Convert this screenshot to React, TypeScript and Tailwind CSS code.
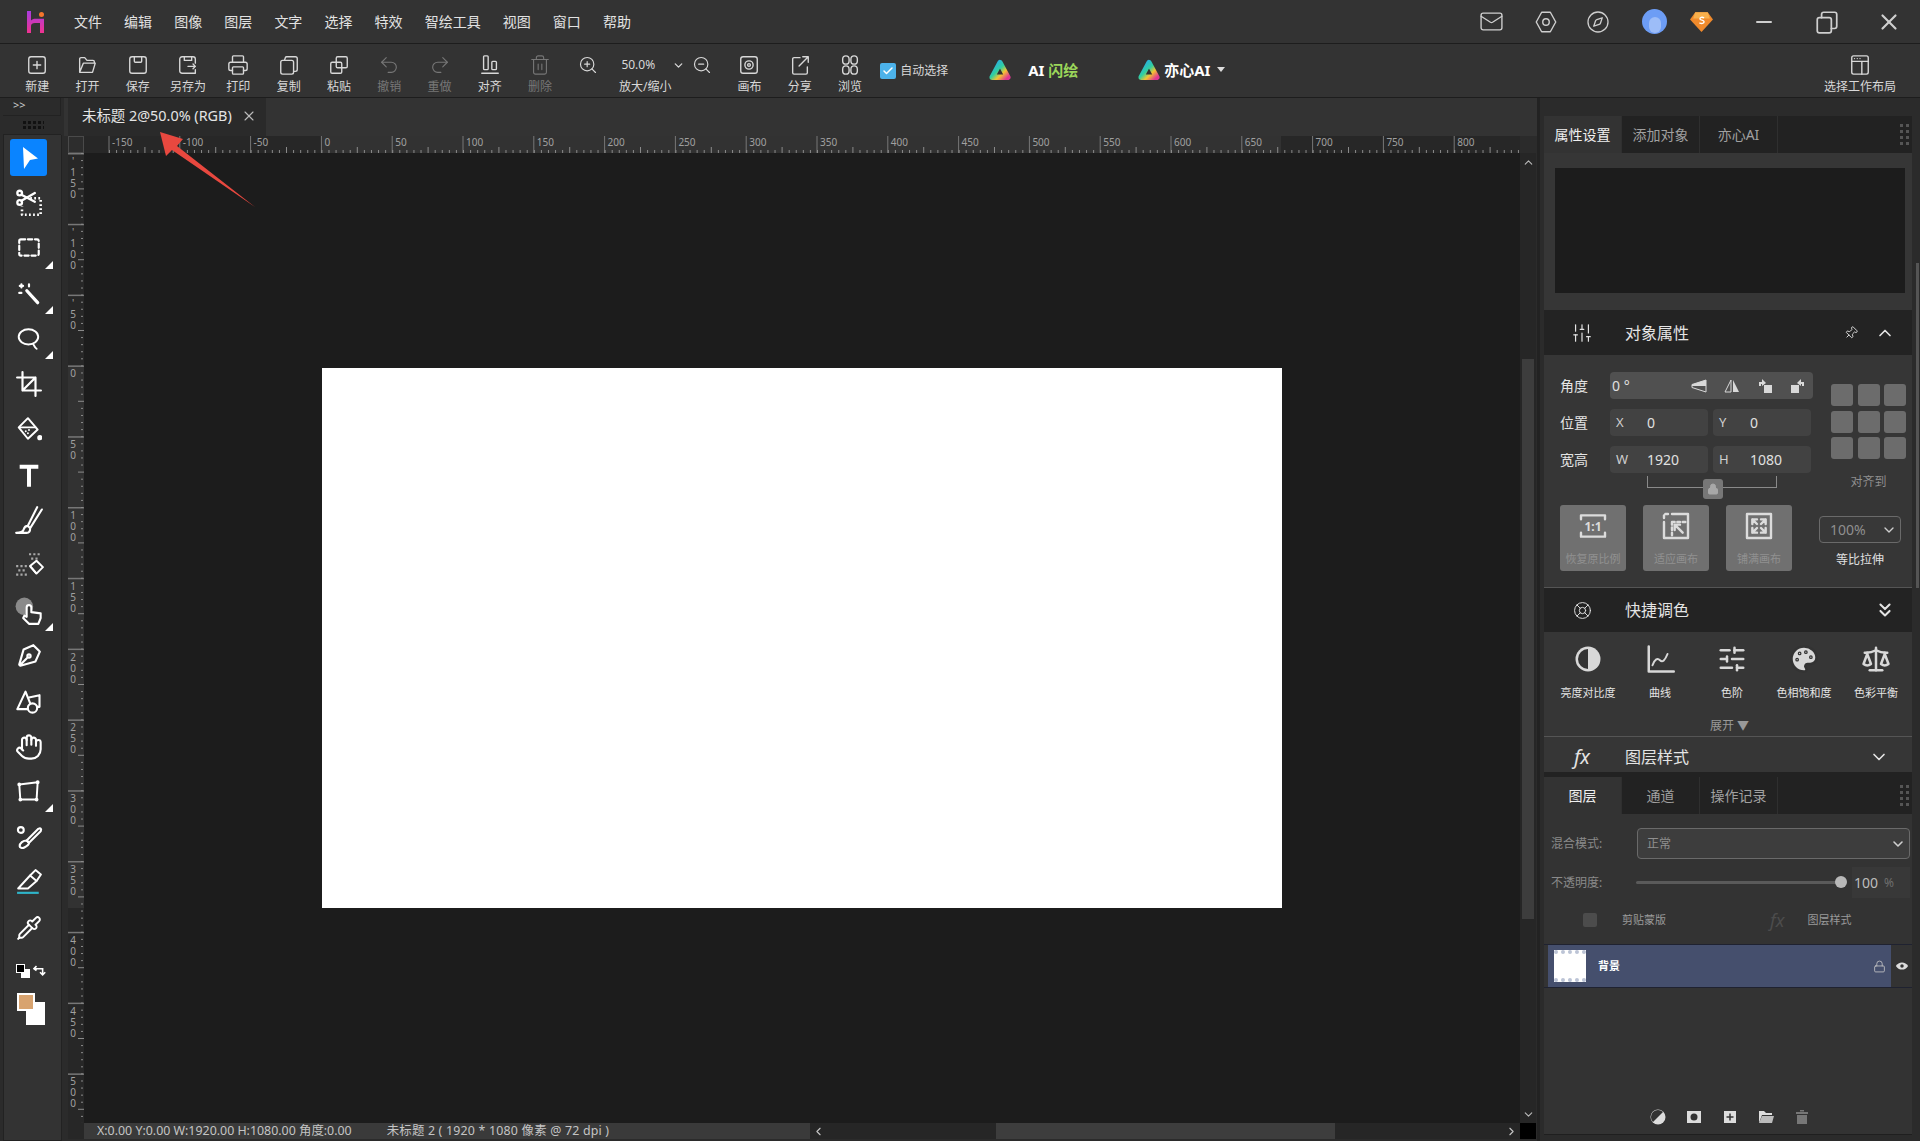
import { ReactNode } from 'react';
import { ChevronDown, ChevronUp, ChevronsDown, ChevronLeft, ChevronRight, Lock, Pin, X, Minus, Hand, Pipette, Printer, Trash2, Undo2, Redo2, ZoomIn, ZoomOut, Mail, Compass, SlidersVertical, SlidersHorizontal, Palette, Scale, LifeBuoy, Check } from 'lucide-react';

const Ic = ({ size = 24, sw = 1.5, children, className }: { size?: number; sw?: number; children: ReactNode; className?: string }) => (
  <svg viewBox="0 0 24 24" width={size} height={size} fill="none" stroke="currentColor" strokeWidth={sw} strokeLinecap="round" strokeLinejoin="round" className={className}>
    {children}
  </svg>
);

const toolbarItems: { label: string; dim?: boolean; icon: ReactNode }[] = [
  { label: '新建', icon: <Ic size={22}><rect x="3" y="3" width="18" height="18" rx="2.5" /><path d="M12 8v8M8 12h8" /></Ic> },
  { label: '打开', icon: <Ic size={22}><path d="M4 20V5.5A1.5 1.5 0 0 1 5.5 4h4l2.5 3h6.5A1.5 1.5 0 0 1 20 8.5V10M4 20h14l3-10H8z" /></Ic> },
  { label: '保存', icon: <Ic size={22}><rect x="3" y="3" width="18" height="18" rx="2.5" /><path d="M8 3v5a1 1 0 0 0 1 1h6a1 1 0 0 0 1-1V3" /></Ic> },
  { label: '另存为', icon: <Ic size={22}><path d="M20 10V5.5A2.5 2.5 0 0 0 17.500 3h-12A2.500 2.500 0 0 0 3 5.500v13A2.500 2.500 0 0 0 5.500 21H20v-4M8 3v4h8V3M12 13.500h8M17.500 11l2.500 2.500-2.500 2.500" /></Ic> },
  { label: '打印', icon: <Printer size={22} strokeWidth={1.5} /> },
  { label: '复制', icon: <Ic size={22}><rect x="3" y="7" width="14" height="15" rx="2" /><path d="M7 7l1-3a1.500 1.500 0 0 1 1.500-1H19a2 2 0 0 1 2 2v12a2 2 0 0 1-2 2h-2" /></Ic> },
  { label: '粘贴', icon: <Ic size={22}><rect x="3" y="9" width="12" height="12" rx="1.500" /><rect x="9" y="3" width="12" height="12" rx="1.500" /></Ic> },
  { label: '撤销', dim: true, icon: <Undo2 size={22} strokeWidth={1.2} /> },
  { label: '重做', dim: true, icon: <Redo2 size={22} strokeWidth={1.2} /> },
  { label: '对齐', icon: <Ic size={22}><rect x="5" y="2" width="5" height="15" rx="1" /><rect x="14" y="8" width="5" height="9" rx="1" /><path d="M3 21h18" /></Ic> },
  { label: '删除', dim: true, icon: <Trash2 size={22} strokeWidth={1.2} /> },
];

const menus = ['文件', '编辑', '图像', '图层', '文字', '选择', '特效', '智绘工具', '视图', '窗口', '帮助'];

const AiLogo = ({ id }: { id: string }) => (
  <svg viewBox="0 0 24 24" width={22} height={24} fill="none">
    <defs>
      <linearGradient id={id} x1="0" y1="0" x2="1" y2="1">
        <stop offset="0" stopColor="#2aa5f0" />
        <stop offset="0.45" stopColor="#2fd0a0" />
        <stop offset="0.7" stopColor="#f4c430" />
        <stop offset="1" stopColor="#e0388f" />
      </linearGradient>
    </defs>
    <path d="M12 4 20.500 20H3.500z" stroke={`url(#${id})`} strokeWidth="6" strokeLinejoin="round" />
  </svg>
);

const TopBar = () => (
  <div className="flex h-[44px] shrink-0 items-center border-b border-[#1d1d1d] bg-[#333333] text-[#e2e2e2]">
    <svg viewBox="0 0 17 22" width={17} height={22} className="ml-[27px] shrink-0">
      <defs>
        <linearGradient id="hi" x1="0" y1="0" x2="0" y2="1">
          <stop offset="0" stopColor="#a83ce0" />
          <stop offset="1" stopColor="#f0338f" />
        </linearGradient>
      </defs>
      <path d="M0 0h4v9.500c1-1.200 2.500-1.800 4.500-1.800H17V22h-4V12H8c-2.500 0-4 1-4 3v7H0z" fill="url(#hi)" />
      <circle cx="14.500" cy="3.500" r="2.500" fill="#f5762d" />
    </svg>
    <div className="ml-[30px] flex text-[14px]">
      {menus.map((m) => (
        <span key={m} className="mr-[22.100px] whitespace-nowrap">{m}</span>
      ))}
    </div>
    <div className="ml-auto flex items-center text-[#cfcfcf]">
      <Mail size={25} strokeWidth={1.300} />
      <span className="ml-[29px]">
        <Ic size={26} sw={1.300}><path d="M8 3h8l5 9-5 9H8l-5-9z" /><circle cx="12" cy="12" r="3" /></Ic>
      </span>
      <span className="ml-[27px]"><Compass size={24} strokeWidth={1.300} /></span>
      <span className="ml-[32px] flex h-[25px] w-[25px] items-end justify-center overflow-hidden rounded-full bg-[#6d9df5]">
        <span className="mb-[1px] h-[16px] w-[12px] rounded-full bg-[#9dbdf8]" />
      </span>
      <svg viewBox="0 0 24 24" width={25} height={25} className="ml-[22px]">
        <path d="M6 3h12l5 7-11 12L1 10z" fill="#f08a2c" />
        <path d="M6 3h12l2 6H4z" fill="#f8b04c" />
        <path d="M14.500 8.500c-2-1-4-.500-4 1s4 1 4 2.800-2.500 2-4.500 1" stroke="#fff" strokeWidth="1.300" fill="none" />
      </svg>
      <span className="ml-[38px]"><Minus size={24} strokeWidth={2} /></span>
      <span className="ml-[38px]">
        <Ic size={26} sw={1.600}><rect x="3" y="8" width="13" height="14" rx="2" /><path d="M7 8V5a2 2 0 0 1 2-2h10a2 2 0 0 1 2 2v11a2 2 0 0 1-2 2h-3" /></Ic>
      </span>
      <span className="ml-[36px] mr-[18px]"><X size={26} strokeWidth={2} /></span>
    </div>
  </div>
);

const ToolButton = ({ label, dim, children }: { label: string; dim?: boolean; children: ReactNode }) => (
  <div className={`flex w-[50.300px] shrink-0 flex-col items-center ${dim ? 'text-[#777777]' : 'text-[#d8d8d8]'}`}>
    <div className="flex h-[24px] items-center justify-center">{children}</div>
    <span className="mt-[2px] whitespace-nowrap text-[12px] leading-[16px]">{label}</span>
  </div>
);

const Toolbar = () => (
  <div className="flex h-[54px] shrink-0 items-start border-b border-[#1d1d1d] bg-[#333333] pl-[12px] pt-[9px] text-[#d8d8d8]">
    {toolbarItems.map((t) => (
      <ToolButton key={t.label} label={t.label} dim={t.dim}>{t.icon}</ToolButton>
    ))}
    <div className="ml-[13px] flex h-[24px] w-[20px] items-center justify-center"><ZoomIn size={22} strokeWidth={1.400} /></div>
    <div className="flex w-[94px] flex-col items-center">
      <div className="flex h-[24px] items-center text-[12px]">
        <span className="-ml-[3px]">50.0%</span>
        <ChevronDown size={13} strokeWidth={2.400} className="ml-[17px] -mr-[19px]" />
      </div>
      <span className="mt-[2px] text-[12px] leading-[16px]">放大/缩小</span>
    </div>
    <div className="flex h-[24px] w-[20px] items-center justify-center"><ZoomOut size={22} strokeWidth={1.400} /></div>
    <div className="ml-[12px] flex">
      <ToolButton label="画布">
        <Ic size={22}><rect x="3" y="3" width="18" height="18" rx="2.500" /><circle cx="12" cy="12" r="4.500" /><circle cx="12" cy="12" r="1.500" /></Ic>
      </ToolButton>
      <ToolButton label="分享">
        <Ic size={22}><path d="M12 4H5.500A1.500 1.500 0 0 0 4 5.500v15A1.500 1.500 0 0 0 5.500 22h13a1.500 1.500 0 0 0 1.500-1.500V14M11 13l10-10M15 3h6v6" /></Ic>
      </ToolButton>
      <ToolButton label="浏览">
        <Ic size={22}><rect x="4" y="2" width="7" height="9" rx="3.500" /><rect x="13" y="2" width="7" height="9" rx="3.500" /><rect x="4" y="13" width="7" height="9" rx="3.500" /><rect x="13" y="13" width="7" height="9" rx="3.500" /></Ic>
      </ToolButton>
    </div>
    <div className="ml-[5px] mt-[10px] flex h-[16px] w-[16px] items-center justify-center rounded-[2px] bg-[#4cb2ea] text-white">
      <Check size={12} strokeWidth={3} />
    </div>
    <span className="ml-[4px] mt-[9px] whitespace-nowrap text-[12px] leading-[18px]">自动选择</span>
    <div className="ml-[41px] mt-[5px]"><AiLogo id="ai1" /></div>
    <span className="ml-[17px] mt-[5px] w-[51px] whitespace-nowrap text-[15px] font-bold leading-[24px] text-white">
      AI <span className="text-[#9bd65a]">闪绘</span>
    </span>
    <div className="ml-[59px] mt-[5px]"><AiLogo id="ai2" /></div>
    <span className="ml-[4px] mt-[5px] whitespace-nowrap text-[15px] font-bold leading-[24px] text-white">亦心AI</span>
    <span className="ml-[7px] mt-[14px] h-0 w-0 border-x-[4px] border-t-[5px] border-x-transparent border-t-[#dddddd]" />
    <div className="ml-auto mr-[15px] flex w-[90px] flex-col items-center">
      <div className="flex h-[24px] items-center">
        <Ic size={22}><rect x="3" y="2" width="18" height="20" rx="2" /><path d="M3 8h18M14 8v14M6 5h.01M9 5h.01M12 5h.01" /></Ic>
      </div>
      <span className="mt-[2px] whitespace-nowrap text-[12px] leading-[16px]">选择工作布局</span>
    </div>
  </div>
);

const Corner = () => (
  <span className="absolute bottom-[-2px] right-[-6px] h-0 w-0 border-b-[8px] border-l-[8px] border-b-white border-l-transparent" />
);

const tools: { corner?: boolean; active?: boolean; icon: ReactNode }[] = [
  { active: true, icon: <svg viewBox="0 0 24 24" width={24} height={24}><path d="M6 1 21 12.500 13 14 7 23z" fill="#fff" /></svg> },
  { icon: <Ic size={28} sw={2}><circle cx="4" cy="3.500" r="2" /><circle cx="4" cy="11.500" r="2" /><path d="M5.500 5 17 11M5.500 10 17 3.500" /><path d="M13 8h9v14H6v-7" strokeDasharray="1.500 2" strokeLinecap="butt" strokeWidth={2.200} /></Ic> },
  { corner: true, icon: <Ic size={26} sw={2}><rect x="3" y="4" width="18" height="15" rx="1.500" strokeDasharray="4 2.500" /></Ic> },
  { corner: true, icon: <Ic size={26} sw={2}><path d="M10 9 20 20" strokeWidth={3} /><path d="M5 3v3M3.500 4.500h3M12 3v2M3 11h2" /></Ic> },
  { corner: true, icon: <Ic size={26} sw={1.800}><ellipse cx="11.500" cy="10" rx="9" ry="7" /><path d="M16 17c1 1 1 3 3 4" /></Ic> },
  { icon: <Ic size={26} sw={2}><path d="M6 1v17h17M1 6h17v17M6 18 18 6" /></Ic> },
  { icon: <Ic size={26} sw={1.800}><path d="M11 2 2.500 10.500 11 21l9-8.500z" /><path d="M4 10.500h14" /><circle cx="22" cy="20" r="1.500" fill="currentColor" /><path d="M9 14h.01M12 13h.01M11 16h.01" /></Ic> },
  { icon: <Ic size={28} sw={3.400}><path d="M4 5h16M12 5v17" strokeLinecap="butt" /></Ic> },
  { icon: <Ic size={28} sw={1.800}><path d="M1 23h9c2 0 3-2 3-4l-2-2c-2 0-3 1-3.500 3S5 23 1 23zM11 17 19 1M13 19 23 3" /></Ic> },
  { icon: <svg viewBox="0 0 28 28" width={30} height={30} fill="none"><path d="M15 15l6-5 6 6-6 6z" fill="#333" stroke="#fff" strokeWidth="1.800" strokeLinejoin="round" /><path d="M15 15l6 7" stroke="#fff" strokeWidth="1.800" /><path d="M2 14h2v2H2zM6 14h2v2H6zM10 14h2v2h-2zM4 18h2v2H4zM8 18h2v2H8zM2 22h2v2H2zM6 22h2v2H6zM10 22h2v2h-2zM14 3h2v2h-2zM18 3h2v2h-2zM22 3h2v2h-2zM16 7h2v2h-2zM20 7h2v2h-2z" fill="#a8a8a8" /></svg> },
  { corner: true, icon: <Ic size={28} sw={1.800}><circle cx="8" cy="8" r="7.500" fill="#8a8a8a" stroke="none" /><path d="M10 9v8l-2-1-1 2 5 5h8l2-5v-4l-8-1V9a1.500 1.500 0 0 0-4 0z" fill="#333" /></Ic> },
  { icon: <Ic size={26} sw={2}><path d="M21 7 16 2 7 6l-4 14 1 1 14-4 4-9zM4 20l6-6" /><circle cx="12" cy="12" r="1.500" /></Ic> },
  { icon: <Ic size={28} sw={1.800}><path d="M2 19 9 4l6 15z" /><path d="M12 9l9-2v10h-3" /><circle cx="15" cy="18" r="4" fill="#333" /></Ic> },
  { icon: <Hand size={28} strokeWidth={1.800} /> },
  { corner: true, icon: <Ic size={26} sw={1.800}><path d="M3 5l17-2-1 16H4z" /><path d="M3 5h.01M20 3h.01M19 19h.01M4 19h.01" strokeWidth={3.500} /></Ic> },
  { icon: <Ic size={28} sw={1.800}><path d="M10 15 20 5c2-1 3 0 2 2L12 17z" /><path d="M10 15c-3 0-6 2-6 5 0 1 2 2 4 1s4-2 4-4z" /><circle cx="5" cy="6" r="2.500" /></Ic> },
  { icon: <svg viewBox="0 0 24 24" width={26} height={26} fill="none" stroke="#fff" strokeWidth="1.800" strokeLinejoin="round"><path d="M2 18 13 6l6 5-8 7z" /><path d="M13 6 18 1l5 4-4 6" /><path d="M1 22h20" stroke="#2fb4c9" strokeWidth="2" /></svg> },
  { icon: <Pipette size={26} strokeWidth={1.800} /> },
];

const LeftBar = () => (
  <div className="flex w-[64px] shrink-0 flex-col pl-[3px]">
    <div className="h-[17px] w-[58px] border-r border-[#222222] pl-[10px] text-[11px] leading-[14px] text-[#cccccc]">&gt;&gt;</div>
    <div className="flex h-[20px] w-[58px] flex-col items-center justify-center gap-[2px] border-y border-[#222222] pl-[2px]">
      <span className="h-[3px] w-[22px] bg-[radial-gradient(circle,#111_1.500px,transparent_1.500px)] bg-[length:5px_3px]" />
      <span className="h-[3px] w-[22px] bg-[radial-gradient(circle,#111_1.500px,transparent_1.500px)] bg-[length:5px_3px]" />
    </div>
    <div className="flex w-[59px] flex-1 flex-col border-x border-b border-[#222222] bg-[#333333] text-white">
      <div>
        {tools.map((t, i) => (
          <div key={i} className="flex h-[45.300px] items-center pl-[6px]">
            <div className={`relative flex h-[37px] w-[37px] items-center justify-center rounded-[3px] ${t.active ? 'bg-[#0a84ff]' : ''}`}>
              {t.icon}
              {t.corner && <Corner />}
            </div>
          </div>
        ))}
      </div>
      <div className="relative ml-[12px] mt-[14px] h-[16px] w-[32px]">
        <span className="absolute left-0 top-0 z-10 h-[9px] w-[9px] border border-white bg-black" />
        <span className="absolute left-[5px] top-[5px] h-[9px] w-[9px] bg-white" />
        <svg viewBox="0 0 16 12" width={14} height={11} className="absolute left-[17px] top-[1px]" fill="none" stroke="#fff" strokeWidth="1.800">
          <path d="M4 1 1 4l3 2M1 4h10v6M8 8l3 3 3-3" />
        </svg>
      </div>
      <div className="relative ml-[13px] mt-[13px] h-[33px] w-[30px]">
        <span className="absolute left-[9px] top-[9px] h-[23px] w-[19px] border-2 border-white bg-white" />
        <span className="absolute left-0 top-0 h-[18px] w-[18px] border-2 border-white bg-[#d8a36f]" />
      </div>
    </div>
  </div>
);

const unit = 70.8;
const majors = Array.from({ length: 21 }, (_, i) => -150 + i * 50);

const HRuler = () => (
  <svg width={1436} height={17} className="block shrink-0">
    <rect width={1436} height={17} fill="#272727" />
    <rect x={237} width={960} height={17} fill="#323232" />
    {majors.map((v, i) => {
      const x = 25 + i * unit;
      return (
        <g key={v}>
          <line x1={x} x2={x} y1={0} y2={17} stroke="#777" />
          <text x={x + 3} y={10} fontSize={10} fill="#a0a0a0">{v}</text>
          {Array.from({ length: 10 }, (_, k) => (
            <rect key={k} x={x + k * 7.08} y={k === 5 ? 11 : 14} width={1} height={k === 5 ? 6 : 3} fill="#8a8a8a" />
          ))}
        </g>
      );
    })}
  </svg>
);

const VRuler = () => (
  <svg width={16} height={970} className="block shrink-0">
    <rect width={16} height={970} fill="#272727" />
    <rect y={213} width={16} height={542} fill="#323232" />
    {Array.from({ length: 14 }, (_, i) => -150 + i * 50).map((v, i) => {
      const y = i * unit;
      const digits = String(v).split('');
      return (
        <g key={v}>
          <rect x={0} y={y} width={16} height={1.500} fill="#777" />
          {digits.map((d, k) => (
            <text key={k} x={5} y={y + 12 + k * 11} fontSize={10} fill="#a0a0a0" textAnchor="middle">{d === '-' ? "'" : d}</text>
          ))}
          {Array.from({ length: 10 }, (_, k) => (
            <rect key={k} x={k === 5 ? 10 : 13} y={y + k * 7.08} width={k === 5 ? 6 : 2} height={1} fill="#8a8a8a" />
          ))}
        </g>
      );
    })}
  </svg>
);

const Center = () => (
  <div className="flex w-[1473px] shrink-0 flex-col">
    <div className="flex h-[38px] shrink-0 items-end bg-[#333333] pl-[4px]">
      <div className="flex h-[38px] w-[198px] items-center bg-[#2a2a2a] pb-[2px] pl-[14px] text-[14.400px] text-[#e4e4e4]">
        <span className="whitespace-nowrap">未标题 2@50.0% (RGB)</span>
        <X size={16} strokeWidth={1.600} className="ml-[9px] text-[#bdbdbd]" />
      </div>
    </div>
    <div className="flex shrink-0 pl-[4px]">
      <div className="h-[17px] w-[16px] shrink-0 border border-[#4a4a4a] bg-[#2d2d2d]" />
      <HRuler />
      <div className="h-[17px] w-[17px] bg-[#2b2b2b]" />
    </div>
    <div className="flex h-[970px] shrink-0 pl-[4px]">
      <VRuler />
      <div className="w-[1436px] bg-[#1c1c1c] pl-[238px] pt-[215px]">
        <div className="h-[540px] w-[960px] bg-white" />
      </div>
      <div className="flex w-[16px] flex-col items-center bg-[#262626] text-[#bbbbbb]">
        <ChevronUp size={13} className="mt-[3px]" />
        <div className="mt-[190px] h-[560px] w-[12px] bg-[#3d3d3d]" />
        <ChevronDown size={13} className="mb-[2px] mt-auto" />
      </div>
    </div>
    <div className="flex h-[16px] shrink-0 pl-[4px] text-[#c4c4c4]">
      <div className="h-full w-[16px] bg-[#272727]" />
      <div className="flex w-[726px] items-center whitespace-nowrap bg-[#3a3a3a] pl-[13px] text-[12.400px]">
        <span>X:0.00 Y:0.00 W:1920.00 H:1080.00 角度:0.00</span>
        <span className="ml-[35px] tracking-[0.200px]">未标题 2 ( 1920 * 1080 像素 @ 72 dpi )</span>
      </div>
      <div className="flex w-[710px] items-center bg-[#262626]">
        <ChevronLeft size={13} className="ml-[2px]" />
        <div className="ml-[171px] h-full w-[339px] bg-[#3d3d3d]" />
        <ChevronRight size={13} className="ml-auto mr-[2px]" />
      </div>
      <div className="h-full w-[16px] bg-black" />
    </div>
  </div>
);

const Grip = () => (
  <div className="ml-auto mr-[3px] grid grid-cols-2 gap-x-[3px] gap-y-[3px]">
    {Array.from({ length: 8 }, (_, i) => (
      <span key={i} className="h-[3px] w-[3px] bg-[#555555]" />
    ))}
  </div>
);

const Tabs = ({ items }: { items: string[] }) => (
  <div className="flex h-[37px] shrink-0 items-center bg-[#222222] text-[14px]">
    {items.map((t, i) => (
      <div key={t} className={`flex h-full w-[78px] items-center justify-center whitespace-nowrap border-r border-[#2f2f2f] ${i === 0 ? 'bg-[#333333] text-[#f0f0f0]' : 'text-[#a0a0a0]'}`}>
        {t}
      </div>
    ))}
    <Grip />
  </div>
);

const Field = ({ label, value, w = 'w-[98px]' }: { label: string; value: string; w?: string }) => (
  <div className={`flex h-[27px] items-center rounded-[4px] bg-[#424242] pl-[6px] text-[14px] text-[#e0e0e0] ${w}`}>
    <span className="w-[31px] text-[13px] text-[#cfcfcf]">{label}</span>
    <span>{value}</span>
  </div>
);

const Row = ({ label, children }: { label: string; children: ReactNode }) => (
  <div className="flex h-[27px] items-center">
    <span className="w-[50px] text-[14px] text-[#e4e4e4]">{label}</span>
    <div className="flex gap-[5px]">{children}</div>
  </div>
);

const SectionHeader = ({ icon, title, h, children }: { icon: ReactNode; title: string; h: string; children?: ReactNode }) => (
  <div className={`flex shrink-0 items-center bg-[#232323] text-[#e4e4e4] ${h}`}>
    <div className="mr-[5px] flex w-[76px] justify-center">{icon}</div>
    <span className="text-[16px]">{title}</span>
    <div className="ml-auto flex items-center">{children}</div>
  </div>
);

const bigButtons = [
  { label: '恢复原比例', icon: <Ic size={32} sw={1.800}><path d="M3 7V4h18v3M3 17v3h18v-3" /><text x="12" y="15.500" fontSize="9" fontWeight="700" fill="currentColor" stroke="none" textAnchor="middle">1:1</text></Ic> },
  { label: '适应画布', icon: <Ic size={32} sw={1.800}><path d="M9 3h12v18H3V9" /><path d="M3 6V3h3" strokeDasharray="2 2" /><path d="M9 9v12M9 9h12" strokeDasharray="2 2" /><path d="M11 11l6 6M11 15v-4h4" /></Ic> },
  { label: '铺满画布', icon: <Ic size={32} sw={1.800}><rect x="3" y="3" width="18" height="18" /><path d="M7 7l3.500 3.500M7 10.500V7h3.500M17 7l-3.500 3.500M17 10.500V7h-3.500M7 17l3.500-3.500M7 13.500V17h3.500M17 17l-3.500-3.500M17 13.500V17h-3.500" /></Ic> },
];

const adjustments = [
  { label: '亮度对比度', icon: <svg viewBox="0 0 24 24" width={30} height={30}><circle cx="12" cy="12" r="10" fill="#d8d8d8" /><path d="M12 4a8 8 0 0 0 0 16z" fill="#333" /></svg> },
  { label: '曲线', icon: <Ic size={30} sw={1.600}><path d="M3 2v20h20" strokeWidth={2} /><path d="M6 17c2-5 4-6 6-4s4 0 6-5" /></Ic> },
  { label: '色阶', icon: <SlidersHorizontal size={30} strokeWidth={2} className="text-[#d8d8d8]" /> },
  { label: '色相饱和度', icon: <Palette size={30} strokeWidth={2} fill="#d8d8d8" stroke="#333" /> },
  { label: '色彩平衡', icon: <Scale size={30} strokeWidth={2} /> },
];

const RightPanel = () => (
  <div className="relative flex w-[383px] shrink-0 flex-col border-l-[3px] border-[#222222] pl-[4px] pr-[8px]">
    <div className="h-[18px] shrink-0" />
    <Tabs items={['属性设置', '添加对象', '亦心AI']} />
    <div className="h-[157px] shrink-0 bg-[#363636] pl-[11px] pt-[15px]">
      <div className="h-[125px] w-[350px] bg-[#1c1c1c]" />
    </div>
    <SectionHeader h="h-[45px]" title="对象属性" icon={<SlidersVertical size={22} strokeWidth={1.300} />}>
      <Pin size={14} strokeWidth={1.500} className="mr-[17px] rotate-45" />
      <ChevronUp size={20} strokeWidth={2} className="mr-[17px]" />
    </SectionHeader>
    <div className="h-[233px] shrink-0 border-b border-[#555555] bg-[#363636] pl-[16px] pt-[17px]">
      <div className="flex h-[133px]">
        <div className="w-[253px]">
          <div className="flex flex-col gap-[10px]">
            <Row label="角度">
              <div className="flex h-[27px] w-[203px] items-center rounded-[4px] bg-[#505050] pl-[2px] text-[14px] text-[#e0e0e0]">
                <span>0 °</span>
                <div className="ml-auto flex items-center gap-[17px] pr-[7px] text-[#d8d8d8]">
                  <svg viewBox="0 0 16 16" width={16} height={16}><path d="M15 2v12L1 9.500v-3z" fill="none" stroke="#d8d8d8" /><path d="M15 2v6H1V6.500z" fill="#d8d8d8" /></svg>
                  <svg viewBox="0 0 16 16" width={16} height={16}><path d="M7 2 1 14h6z" fill="none" stroke="#d8d8d8" /><path d="M9 2l6 12H9z" fill="#d8d8d8" /></svg>
                  <svg viewBox="0 0 16 16" width={16} height={16} fill="#d8d8d8"><rect x="7" y="7" width="8" height="8" /><path d="M2 8V4h3V1l4 4-4 3V6H4v2z" /></svg>
                  <svg viewBox="0 0 16 16" width={16} height={16} fill="#d8d8d8"><rect x="1" y="7" width="8" height="8" /><path d="M14 8V4h-3V1L7 5l4 3V6h1v2z" /></svg>
                </div>
              </div>
            </Row>
            <Row label="位置"><Field label="X" value="0" /><Field label="Y" value="0" /></Row>
            <Row label="宽高"><Field label="W" value="1920" /><Field label="H" value="1080" /></Row>
          </div>
          <div className="relative ml-[87px] mt-[3px] h-[12px] w-[130px] border-x border-b border-[#8a8a8a]">
            <div className="absolute left-[55px] top-[3px] flex h-[20px] w-[20px] items-center justify-center rounded-[3px] bg-[#777777] text-[#a8a8a8]">
              <Lock size={12} fill="currentColor" />
            </div>
          </div>
        </div>
        <div className="ml-[18px] pt-[12px]">
          <div className="grid grid-cols-[repeat(3,22px)] gap-[4.500px]">
            {Array.from({ length: 9 }, (_, i) => (
              <span key={i} className="h-[22px] rounded-[3px] bg-[#6c6c6c]" />
            ))}
          </div>
          <p className="mt-[14px] text-center text-[12px] text-[#8f8f8f]">对齐到</p>
        </div>
      </div>
      <div className="flex">
        <div className="flex gap-[17px]">
          {bigButtons.map((b) => (
            <div key={b.label} className="flex h-[66px] w-[66px] flex-col items-center rounded-[3px] bg-[#707070] pt-[5px] text-[#dcdcdc]">
              {b.icon}
              <span className="mt-[10px] whitespace-nowrap text-[11px] leading-[14px] text-[#909090]">{b.label}</span>
            </div>
          ))}
        </div>
        <div className="ml-[27px] pt-[11px]">
          <div className="flex h-[27px] w-[82px] items-center justify-between rounded-[4px] border border-[#6a6a6a] bg-[#383838] px-[10px] pr-[3px] text-[14px] text-[#8f8f8f]">
            100%
            <ChevronDown size={16} className="text-[#cfcfcf]" />
          </div>
          <p className="mt-[8px] text-center text-[12px] leading-[18px] text-[#e0e0e0]">等比拉伸</p>
        </div>
      </div>
    </div>
    <SectionHeader h="h-[44px]" title="快捷调色" icon={<LifeBuoy size={19} strokeWidth={1.200} />}>
      <ChevronsDown size={22} strokeWidth={2.200} className="mr-[16px]" />
    </SectionHeader>
    <div className="h-[105px] shrink-0 border-b border-[#555555] bg-[#363636] pl-[8px] pt-[11px]">
      <div className="flex">
        {adjustments.map((a) => (
          <div key={a.label} className="flex w-[72px] flex-col items-center text-[#d8d8d8]">
            <div className="flex h-[32px] items-center">{a.icon}</div>
            <span className="mt-[10px] whitespace-nowrap text-[11px] leading-[16px] text-[#e4e4e4]">{a.label}</span>
          </div>
        ))}
      </div>
      <p className="mt-[16px] pr-[5px] text-center text-[12px] leading-[18px] text-[#999999]">展开 ▼</p>
    </div>
    <div className="h-[35px] shrink-0 bg-[#363636] pt-[5px] text-[#e4e4e4]">
      <div className="flex h-full items-center">
        <span className="mr-[5px] flex w-[76px] justify-center text-[20px] italic leading-[24px]">fx</span>
        <span className="text-[16px]">图层样式</span>
        <ChevronDown size={20} strokeWidth={2} className="ml-auto mr-[23px]" />
      </div>
    </div>
    <div className="h-[5px] shrink-0 bg-[#222222]" />
    <Tabs items={['图层', '通道', '操作记录']} />
    <div className="flex h-[321px] shrink-0 flex-col border-b border-[#1f1f1f] bg-[#333333]">
      <div className="mt-[14px] flex items-center pl-[7px]">
        <span className="w-[86px] text-[12px] text-[#8a8a8a]">混合模式:</span>
        <div className="flex h-[31px] w-[273px] items-center justify-between rounded-[4px] border border-[#6a6a6a] bg-[#3d3d3d] pl-[9px] pr-[3px] text-[12px] text-[#8f8f8f]">
          正常
          <ChevronDown size={16} strokeWidth={2.400} className="text-[#cfcfcf]" />
        </div>
      </div>
      <div className="mt-[8px] flex h-[31px] items-center pl-[7px]">
        <span className="w-[85px] text-[12px] text-[#8a8a8a]">不透明度:</span>
        <div className="relative h-[3px] w-[206px] rounded-full bg-[#5a5a5a]">
          <span className="absolute right-[-5px] top-[-5px] h-[12px] w-[12px] rounded-full bg-[#b8b8b8]" />
        </div>
        <div className="ml-[10px] flex h-[31px] w-[58px] items-center bg-[#383838] pl-[2px] text-[14px] text-[#bdbdbd]">
          100<span className="ml-[6px] text-[12px] text-[#6f6f6f]">%</span>
        </div>
      </div>
      <div className="mt-[7px] flex h-[30px] items-center text-[11px] text-[#9a9a9a]">
        <span className="ml-[39px] h-[14px] w-[14px] rounded-[2px] bg-[#4c4c4c]" />
        <span className="ml-[25px]">剪贴蒙版</span>
        <span className="ml-[104px] text-[18px] italic leading-[20px] text-[#4c4c4c]">fx</span>
        <span className="ml-[23px]">图层样式</span>
      </div>
      <div className="mt-[9px] flex h-[44px] shrink-0 border-y border-[#1f2230] pl-[4px]">
        <div className="flex w-[343px] items-center bg-[#454f6d] pl-[6px]">
          <div className="h-[32px] w-[32px] border-y-[4px] border-dotted border-[#bcc4d6] bg-white" />
          <span className="ml-[12px] text-[11px] font-bold text-white">背景</span>
          <Lock size={13} strokeWidth={1.500} className="ml-auto mr-[5px] text-[#c8c8c8]" />
        </div>
        <div className="flex w-[21px] items-center justify-center">
          <svg viewBox="0 0 16 16" width={14} height={14}>
            <path d="M1 8c3-5.500 11-5.500 14 0-3 5.500-11 5.500-14 0z" fill="#dddddd" />
            <circle cx="8" cy="8" r="2" fill="#333" />
          </svg>
        </div>
      </div>
      <div className="mb-[9px] mt-auto flex items-center justify-center gap-[20px] pl-[4px] text-[#dddddd]">
        <svg viewBox="0 0 16 16" width={16} height={16}><circle cx="8" cy="8" r="7.500" fill="#ddd" /><path d="M3 13 13 3A7 7 0 0 0 3 13z" fill="#333" /></svg>
        <svg viewBox="0 0 16 16" width={16} height={16}><path d="M1 2h14v12H1z" fill="#ddd" /><circle cx="8" cy="8" r="3.500" fill="#333" /></svg>
        <svg viewBox="0 0 16 16" width={16} height={16}><rect x="2" y="2" width="12" height="12" fill="#ddd" /><path d="M8 4.500v7M4.500 8h7" stroke="#333" strokeWidth="1.500" /></svg>
        <svg viewBox="0 0 16 16" width={16} height={16}><path d="M1 2h5l2 2h6v2H4L1 14z" fill="#ddd" /><path d="M4 7h12l-2 7H1z" fill="#bbb" /></svg>
        <svg viewBox="0 0 16 16" width={16} height={16}><path d="M2 3h12v2H2zM6 1h4v1.500H6zM3 6h10v9H3z" fill="#777" /></svg>
      </div>
    </div>
    <div className="absolute right-[1px] top-[165px] h-[325px] w-[3px] bg-[#555555]" />
  </div>
);

const App = () => {
  return (
    <div className="relative flex h-[1141px] w-[1920px] flex-col overflow-hidden bg-[#2b2b2b] font-['Noto_Sans','Noto_Sans_CJK_SC',sans-serif]">
      <TopBar />
      <Toolbar />
      <div className="flex min-h-0 flex-1">
        <LeftBar />
        <Center />
        <RightPanel />
      </div>
      {/* annotation arrow */}
      <svg className="absolute left-0 top-0" width={300} height={220}>
        <path d="M160 132 183 139 177 146 255 207 172 150 166 156z" fill="#e8483f" />
      </svg>
    </div>
  );
};

export default App;
